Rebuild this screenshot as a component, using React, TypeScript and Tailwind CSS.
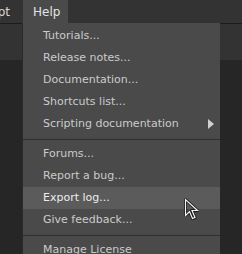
const GROUPS = [
  ['Tutorials...', 'Release notes...', 'Documentation...', 'Shortcuts list...', 'Scripting documentation'],
  ['Forums...', 'Report a bug...', 'Export log...', 'Give feedback...'],
  ['Manage License'],
];

export default function App() {
  return (
    <div className="relative w-[242px] h-[254px] overflow-hidden bg-[#262626] font-['DejaVu_Sans',sans-serif] text-[11px]">
      {/* menu bar */}
      <div className="h-[23px] bg-[#333333] flex items-center text-[#d8d8d8] text-[12px]">
        <div className="w-[23px] h-full overflow-hidden flex items-center justify-end pr-[13px]">
          <span className="whitespace-nowrap">Script</span>
        </div>
        <span className="h-full w-[45px] bg-[#4a4a4a] flex items-center pl-[10px] text-[#e4e4e4]">Help</span>
      </div>
      <div className="h-px bg-[#1c1c1c]" />
      {/* toolbar */}
      <div className="h-[36px] bg-[#333333]" />

      {/* dropdown */}
      <div className="absolute left-[22px] top-[23px] w-[198px] pl-px bg-[#2a2a2a]">
        <div className="bg-[#4a4a4a] pt-[2px] text-[#cacaca]">
          {GROUPS.map((g, gi) => (
            <div key={gi}>
              {gi > 0 && (
                <div className="h-[8px] flex items-center">
                  <div className="h-px w-full bg-[#2f2f2f]" />
                </div>
              )}
              {g.map((item) => (
                <div
                  key={item}
                  className={`h-[22px] flex items-center pl-[20px] pr-[6px] ${
                    item === 'Export log...' ? 'bg-[#5b5b5b] text-[#ececec]' : ''
                  }`}
                >
                  <span className="flex-1">{item}</span>
                  {item === 'Scripting documentation' && (
                    <svg width="6" height="10" viewBox="0 0 6 10">
                      <path d="M0 0 L6 5 L0 10 Z" fill="#d0d0d0" />
                    </svg>
                  )}
                </div>
              ))}
            </div>
          ))}
        </div>
      </div>

      {/* mouse pointer */}
      <svg className="absolute left-[184px] top-[198px]" width="16" height="24" viewBox="0 0 16 24">
        <path
          d="M1.5 1.5 L1.5 17.5 L5.5 13.5 L8.5 20.5 L11 19.5 L8 12.5 L13.5 12.5 Z"
          fill="none"
          stroke="#1a1a1a"
          strokeWidth="3"
          strokeLinejoin="round"
        />
        <path
          d="M1.5 1.5 L1.5 17.5 L5.5 13.5 L8.5 20.5 L11 19.5 L8 12.5 L13.5 12.5 Z"
          fill="none"
          stroke="#f4f4f4"
          strokeWidth="1.2"
        />
      </svg>
    </div>
  );
}
